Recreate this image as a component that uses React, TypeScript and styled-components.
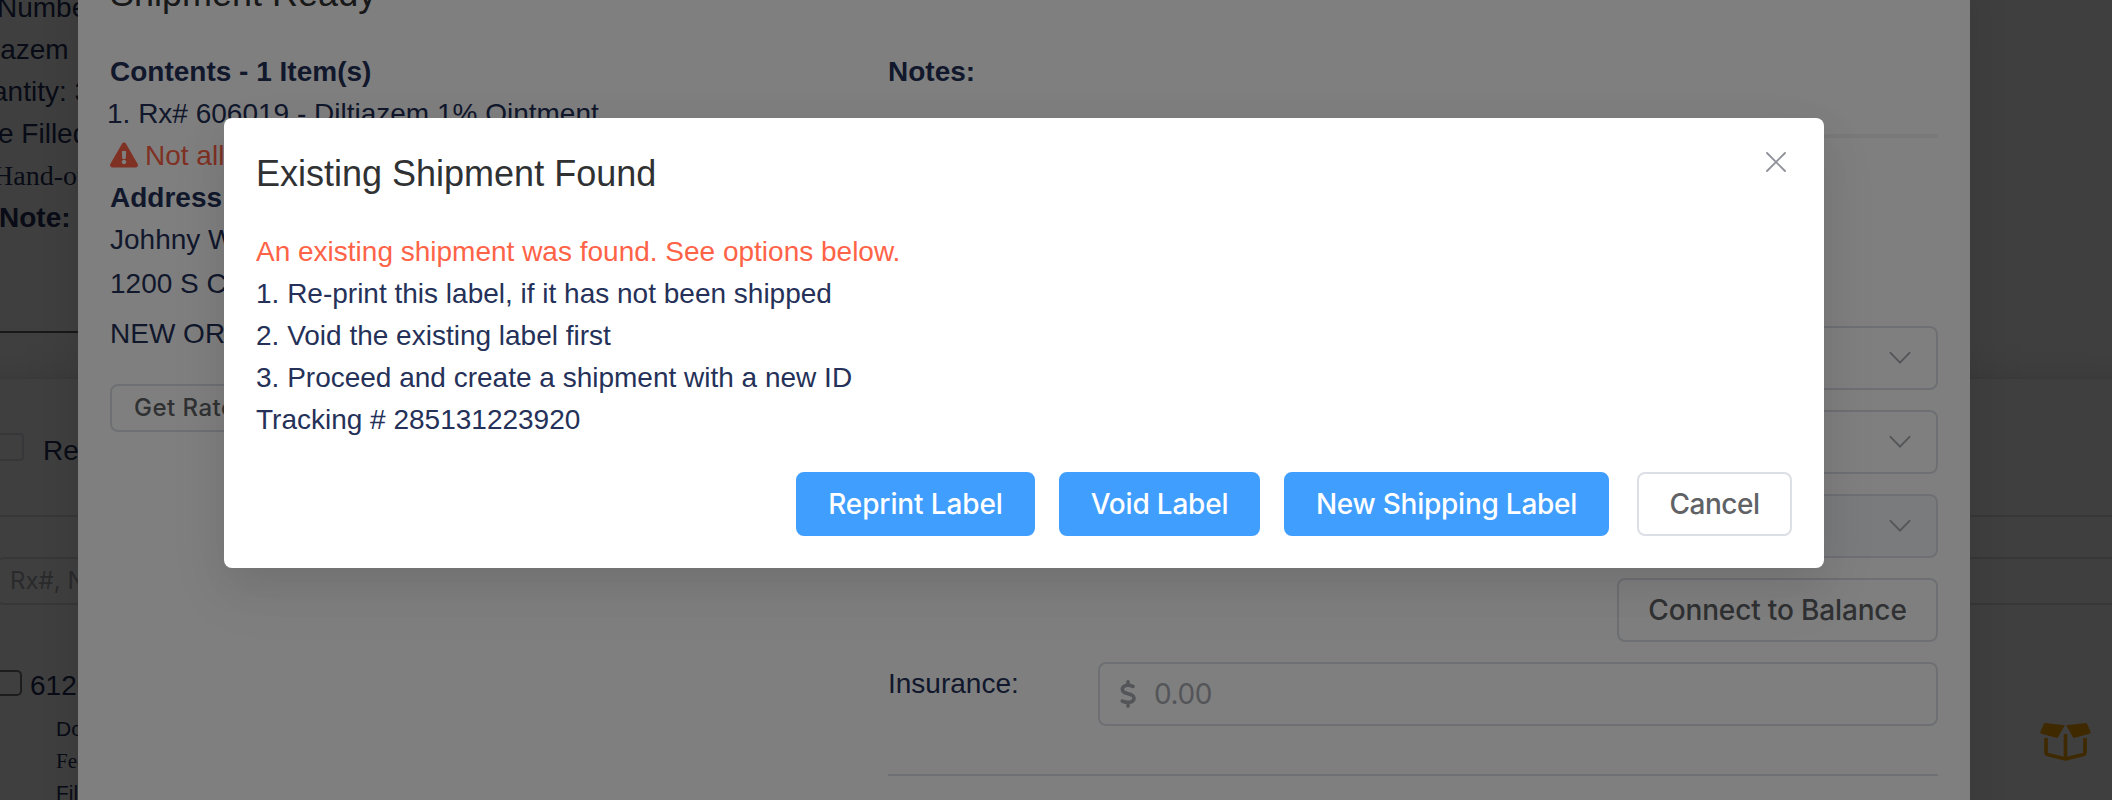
import React from 'react';
import styled, { createGlobalStyle, css } from 'styled-components';
import { FaExclamationTriangle } from 'react-icons/fa';

const sans = "'Liberation Sans', Arial, sans-serif";
const ui = "Inter, 'Liberation Sans', sans-serif";
const serif = "'Liberation Serif', 'Times New Roman', serif";

const GlobalStyle = createGlobalStyle`
  * { box-sizing: border-box; }
  html, body { margin: 0; padding: 0; overflow: hidden; }
  body { background: #fff; font-family: ${sans}; font-size: 28px; line-height: 42px; color: #253158; }
  p, h2 { margin: 0; font-weight: 400; }
`;

const Screen = styled.div`
  position: relative;
  width: 2112px;
  height: 800px;
  overflow: hidden;
`;

const Page = styled.div`
  display: flex;
  flex-direction: column;
  height: 100%;
  white-space: nowrap;
`;

const Summary = styled.section`
  flex: none;
  width: 1900px;
  height: 333px;
  border-bottom: 2px solid #606266;
  overflow: hidden;
`;

const SummaryLine = styled.p<{ $shift: number; $serif?: boolean; $bold?: boolean }>`
  height: 42px;
  margin-left: ${(p) => p.$shift}px;
  font-family: ${(p) => (p.$serif ? serif : sans)};
  font-weight: ${(p) => (p.$bold ? 700 : 400)};
  &:first-child { margin-top: -13px; }
`;

const Card = styled.section`
  flex: none;
  height: 480px;
  margin: 44px -20px 0;
  padding: 0 20px;
  border-top: 2px solid #e6e8ee;
  box-shadow: 0 0 40px rgba(0, 0, 0, 0.12);
`;

const FilterRow = styled.div`
  display: flex;
  align-items: center;
  height: 138px;
  margin: 0 -20px;
  padding: 0 20px;
  border-bottom: 2px solid #e0e3ea;
`;

const Checkbox = styled.span<{ $dark?: boolean }>`
  flex: none;
  width: 28px;
  height: ${(p) => (p.$dark ? 26 : 28)}px;
  border: 2px solid ${(p) => (p.$dark ? '#767676' : '#dcdfe6')};
  border-radius: ${(p) => (p.$dark ? 5 : 4)}px;
  margin-left: ${(p) => (p.$dark ? -6 : -4)}px;
`;

const CheckLabel = styled.span<{ $gap: number; $drop: number }>`
  margin-left: ${(p) => p.$gap}px;
  padding-top: ${(p) => p.$drop}px;
`;

const SearchBox = styled.div`
  height: 48px;
  margin: 40px -20px 0 -4px;
  padding-left: 12px;
  border: 2px solid #dcdfe6;
  border-radius: 8px;
  font: 400 24px/44px ${ui};
  color: #a8abb2;
`;

const Order = styled.div`
  display: flex;
  align-items: center;
  height: 42px;
  margin-top: 57px;
`;

const OrderDetails = styled.div`
  margin: 9px 0 0 56px;
  font-size: 21px;
  line-height: 32px;
`;

const DetailLine = styled.p<{ $serif?: boolean }>`
  font-family: ${(p) => (p.$serif ? serif : sans)};
`;

const BoxBadge = styled.div`
  position: absolute;
  left: 2040px;
  top: 722px;
  display: flex;
`;

const Mask = styled.div`
  position: absolute;
  inset: 0;
  background: rgba(0, 0, 0, 0.5);
`;

const dialogShadow = css`
  box-shadow: 0 24px 64px 8px rgba(0, 0, 0, 0.04), 0 16px 40px rgba(0, 0, 0, 0.08);
`;

const ShipmentDialog = styled.div`
  width: 1892px;
  height: 1100px;
  margin: -40px 0 0 78px;
  padding: 10px 32px 0;
  background: #fff;
  white-space: nowrap;
  ${dialogShadow}
`;

const Title = styled.h2`
  font-size: 36px;
  line-height: 48px;
  color: #303133;
`;

const Columns = styled.div`
  display: grid;
  grid-template-columns: 778px 1050px;
  padding-top: 32px;
`;

const Column = styled.div`
  display: flex;
  flex-direction: column;
`;

const Line = styled.p<{ $bold?: boolean; $warn?: boolean; $height?: number; $shift?: number }>`
  display: flex;
  align-items: center;
  height: ${(p) => p.$height ?? 42}px;
  margin-left: ${(p) => p.$shift ?? 0}px;
  padding-top: 2px;
  font-weight: ${(p) => (p.$bold ? 700 : 400)};
  color: ${(p) => (p.$warn ? 'tomato' : 'inherit')};
  svg { margin: -2px 7px 0 0; }
`;

const Button = styled.button<{ $primary?: boolean; $small?: boolean; $width: number; $track?: number }>`
  width: ${(p) => p.$width}px;
  height: ${(p) => (p.$small ? 48 : 64)}px;
  padding: 0;
  border: 2px solid ${(p) => (p.$primary ? '#409eff' : '#dcdfe6')};
  border-radius: 8px;
  background: ${(p) => (p.$primary ? '#409eff' : '#fff')};
  color: ${(p) => (p.$primary ? '#fff' : '#606266')};
  font: 500 ${(p) => (p.$small ? 24 : 28)}px/1 ${ui};
  letter-spacing: ${(p) => p.$track ?? 0}px;
`;

const RatesButton = styled(Button)`
  margin-top: 24px;
`;

const Rule = styled.div<{ $thick?: boolean }>`
  height: ${(p) => (p.$thick ? 4 : 2)}px;
  margin-top: ${(p) => (p.$thick ? 42 : 48)}px;
  background: ${(p) => (p.$thick ? '#f3f3f4' : '#dcdfe6')};
`;

const Fields = styled.div`
  display: flex;
  flex-direction: column;
  align-items: flex-end;
  gap: 20px;
  margin-top: 188px;
`;

const Select = styled.div<{ $disabled?: boolean }>`
  display: flex;
  align-items: center;
  justify-content: flex-end;
  width: 840px;
  height: 64px;
  padding-right: 25px;
  border: 2px solid #dcdfe6;
  border-radius: 8px;
  background: ${(p) => (p.$disabled ? '#f5f7fa' : '#fff')};
`;

const InsuranceRow = styled.div`
  display: grid;
  grid-template-columns: 210px 840px;
  width: 1050px;
  height: 64px;
`;

const MoneyInput = styled.div`
  display: flex;
  align-items: center;
  padding-left: 20px;
  border: 2px solid #dcdfe6;
  border-radius: 8px;
  font: 400 28px/1 ${ui};
  letter-spacing: -0.4px;
  color: #a8abb2;
  svg { margin-right: 18px; }
`;

const ConfirmDialog = styled.div`
  position: relative;
  width: 1600px;
  height: 450px;
  margin: 118px 0 0 224px;
  padding: 32px;
  border-radius: 8px;
  background: #fff;
  ${dialogShadow}
`;

const Message = styled.div`
  margin-top: 32px;
`;

const CloseButton = styled.span`
  position: absolute;
  top: 34px;
  right: 38px;
  display: flex;
`;

const Footer = styled.div`
  display: flex;
  justify-content: flex-end;
  gap: 24px;
  margin-top: 32px;
  button:last-child { margin-left: 4px; }
`;

const Chevron = () => (
  <svg width="22" height="14" viewBox="0 0 22 14" fill="none" stroke="#a8abb2" strokeWidth="1.9" strokeLinecap="round">
    <path d="M1.500 1.800 11 11.600 20.500 1.800" />
  </svg>
);

const CloseIcon = () => (
  <svg width="20" height="20" viewBox="0 0 20 20" fill="none" stroke="#909399" strokeWidth="1.9" strokeLinecap="round">
    <path d="M1 1 19 19M19 1 1 19" />
  </svg>
);

const DollarIcon = () => (
  <svg width="16" height="28" viewBox="0 0 16 28" fill="none" stroke="#a8abb2" strokeWidth="3.600" strokeLinecap="round" strokeLinejoin="round">
    <path d="M8 1.800V5M8 23v3.200M13 6.500C10.500 5.400 7.800 4.900 5.400 5.600 2 6.700 1.200 10.600 4.200 12.400c2.300 1.400 5.600 1.500 8 2.900 2.800 1.700 2.200 5.600-1.300 6.700-2.700.8-6 .2-8.600-1" />
  </svg>
);

const BoxIcon = () => (
  <svg width="52" height="40" viewBox="0 0 52 40" fill="#ffa500">
    <path d="M5.200 1 24.800 3.200 18.500 14.500Q17.900 16.200 16.200 15.800L1.500 11.800Q-.2 11.200.5 9.500L3.800 2Q4.200.9 5.200 1Z" />
    <path d="M45.800 1 26.200 3.200 32.500 14.500Q33.100 16.200 34.800 15.800L49.500 11.800Q51.200 11.200 50.500 9.500L47.200 2Q46.800.9 45.800 1Z" />
    <path d="M6 16v14.500Q6 32 7.500 32.500L25.500 37 43.500 32.500Q45 32 45 30.500V16" fill="none" stroke="#ffa500" strokeWidth="3.700" strokeLinejoin="round" />
    <path d="M25.500 13.500V36" fill="none" stroke="#ffa500" strokeWidth="3.700" strokeLinecap="round" />
  </svg>
);

export default function App() {
  return (
    <Screen>
      <GlobalStyle />
      <Page>
        <Summary>
          <SummaryLine $shift={-3}>Number</SummaryLine>
          <SummaryLine $shift={-6}>iazem</SummaryLine>
          <SummaryLine $shift={-8}>antity: 30</SummaryLine>
          <SummaryLine $shift={-2}>e Filled</SummaryLine>
          <SummaryLine $shift={-7} $serif>Hand-out</SummaryLine>
          <SummaryLine $shift={-1} $bold>Note:</SummaryLine>
        </Summary>
        <Card>
          <FilterRow>
            <Checkbox />
            <CheckLabel $gap={19} $drop={8}>Re</CheckLabel>
          </FilterRow>
          <SearchBox>Rx#, N</SearchBox>
          <Order>
            <Checkbox $dark />
            <CheckLabel $gap={8} $drop={5}>6120</CheckLabel>
          </Order>
          <OrderDetails>
            <DetailLine>Doc</DetailLine>
            <DetailLine $serif>Fec</DetailLine>
            <DetailLine>Fill</DetailLine>
          </OrderDetails>
        </Card>
        <BoxBadge><BoxIcon /></BoxBadge>
      </Page>

      <Mask>
        <ShipmentDialog>
          <Title>Shipment Ready</Title>
          <Columns>
            <Column>
              <Line $bold>Contents - 1 Item(s)</Line>
              <Line $shift={-3}>1. Rx# 606019 - Diltiazem 1% Ointment</Line>
              <Line $warn><FaExclamationTriangle size={28} />Not all</Line>
              <Line $bold>Address</Line>
              <Line>Johhny W</Line>
              <Line $height={46}>1200 S C</Line>
              <Line $height={54}>NEW OR</Line>
              <RatesButton $small $width={163} $track={0.5}>Get Rates</RatesButton>
            </Column>
            <Column>
              <Line $bold>Notes:</Line>
              <Rule $thick />
              <Fields>
                <Select><Chevron /></Select>
                <Select><Chevron /></Select>
                <Select $disabled><Chevron /></Select>
                <Button $width={321} $track={-0.15}>Connect to Balance</Button>
                <InsuranceRow>
                  <Line>Insurance:</Line>
                  <MoneyInput><DollarIcon />0.00</MoneyInput>
                </InsuranceRow>
              </Fields>
              <Rule />
            </Column>
          </Columns>
        </ShipmentDialog>
      </Mask>

      <Mask>
        <ConfirmDialog>
          <CloseButton><CloseIcon /></CloseButton>
          <Title>Existing Shipment Found</Title>
          <Message>
            <Line $warn>An existing shipment was found. See options below.</Line>
            <Line>1. Re-print this label, if it has not been shipped</Line>
            <Line>2. Void the existing label first</Line>
            <Line>3. Proceed and create a shipment with a new ID</Line>
            <Line>Tracking # 285131223920</Line>
          </Message>
          <Footer>
            <Button $primary $width={239} $track={-0.12}>Reprint Label</Button>
            <Button $primary $width={201} $track={-0.2}>Void Label</Button>
            <Button $primary $width={325} $track={-0.25}>New Shipping Label</Button>
            <Button $width={155} $track={-0.45}>Cancel</Button>
          </Footer>
        </ConfirmDialog>
      </Mask>
    </Screen>
  );
}
